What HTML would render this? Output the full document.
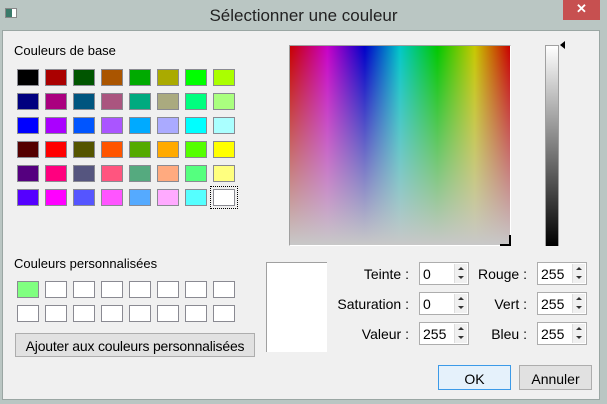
<!DOCTYPE html>
<html><head><meta charset="utf-8"><style>
*{margin:0;padding:0;box-sizing:border-box}
body{width:607px;height:404px;background:#bac6c3;position:relative;overflow:hidden;font-family:"Liberation Sans",sans-serif;font-size:12px;color:#000}
.a{position:absolute}
.sw{position:absolute;width:22px;height:17px;border:1px solid #8a8a92}
.lbl{position:absolute;text-align:right;width:120px;font-size:13px}
.spin{position:absolute;width:50px;height:23px;background:#fff;border:1px solid #adadad;font-size:14px;padding:3px 0 0 3px}
.spin i{position:absolute;right:1px;top:1px;width:13px;height:19px;border-left:1px solid #ddd;background:#f0f0f0}
.spin i:before{content:"";position:absolute;left:3px;top:3px;border:3px solid transparent;border-bottom:3px solid #333;border-top:0}
.spin i:after{content:"";position:absolute;left:3px;top:12px;border:3px solid transparent;border-top:3px solid #333;border-bottom:0}
.btn{position:absolute;background:#e1e1e1;border:1px solid #adadad;text-align:center;font-size:13px}
</style></head><body>
<div class="a" style="left:5px;top:8px;width:12px;height:10px;background:#fff;border:1px solid #888"><div style="width:6px;height:8px;background:#3a7a6a"></div></div>
<div class="a" style="left:0;width:607px;top:6px;text-align:center;font-size:17px;color:#222">Sélectionner une couleur</div>
<div class="a" style="left:563px;top:0;width:37px;height:20px;background:#c75050;color:#fff;text-align:center;font-size:13px;font-weight:bold;line-height:18px">✕</div>
<div class="a" style="left:2px;top:30px;width:598px;height:370px;background:#f0f0f0;border:1px solid #9aa6a3"></div>

<div class="a" style="left:14px;top:43px;font-size:13px">Couleurs de base</div>
<div id="g"></div>
<div class="a" style="left:14px;top:256px;font-size:13px">Couleurs personnalisées</div>
<div class="btn" style="left:15px;top:333px;width:240px;height:24px;padding-top:4px;font-size:14px;letter-spacing:-0.2px">Ajouter aux couleurs personnalisées</div>

<div class="a" style="left:289px;top:45px;width:222px;height:201px;border-top:1px solid #a0a0a0;border-left:1px solid #a0a0a0;border-right:1px solid #fff;border-bottom:1px solid #fff;background:linear-gradient(to bottom,rgba(200,200,200,0),rgba(200,200,200,1)),linear-gradient(to right,#c80000,#c800c8 17%,#0000c8 34%,#00c8c8 50%,#00c800 67%,#c8c800 84%,#c80000)"></div>
<div class="a" style="left:500px;top:235px;width:11px;height:11px;border-right:2px solid #000;border-bottom:2px solid #000"></div>
<div class="a" style="left:545px;top:45px;width:14px;height:201px;border:1px solid #a0a0a0;border-bottom:0;background:linear-gradient(#fff,#000)"></div>
<div class="a" style="left:560px;top:41px;border:4px solid transparent;border-right:5px solid #000;border-left:0"></div>

<div class="a" style="left:266px;top:262px;width:61px;height:90px;background:#fff;border-left:1px solid #a0a0a0;border-top:1px solid #a0a0a0"></div>

<div class="lbl" style="left:289px;top:266px;font-size:14px">Teinte :</div>
<div class="lbl" style="left:289px;top:296px;font-size:14px">Saturation :</div>
<div class="lbl" style="left:289px;top:326px;font-size:14px">Valeur :</div>
<div class="lbl" style="left:407px;top:266px;font-size:14px">Rouge :</div>
<div class="lbl" style="left:407px;top:296px;font-size:14px">Vert :</div>
<div class="lbl" style="left:407px;top:326px;font-size:14px">Bleu :</div>
<div class="spin" style="left:419px;top:262px">0<i></i></div>
<div class="spin" style="left:419px;top:292px">0<i></i></div>
<div class="spin" style="left:419px;top:322px">255<i></i></div>
<div class="spin" style="left:537px;top:262px">255<i></i></div>
<div class="spin" style="left:537px;top:292px">255<i></i></div>
<div class="spin" style="left:537px;top:322px">255<i></i></div>

<div class="btn" style="left:438px;top:365px;width:73px;height:25px;padding-top:5px;border-color:#3c9ae8;background:#e5f1fb;font-size:14px">OK</div>
<div class="btn" style="left:519px;top:365px;width:73px;height:25px;padding-top:5px;font-size:14px">Annuler</div>

<script>
var c=[["#000000","#aa0000","#005500","#aa5500","#00aa00","#aaaa00","#00ff00","#aaff00"],
["#00007f","#aa007f","#00557f","#aa557f","#00aa7f","#aaaa7f","#00ff7f","#aaff7f"],
["#0000ff","#aa00ff","#0055ff","#aa55ff","#00aaff","#aaaaff","#00ffff","#aaffff"],
["#550000","#ff0000","#555500","#ff5500","#55aa00","#ffaa00","#55ff00","#ffff00"],
["#55007f","#ff007f","#55557f","#ff557f","#55aa7f","#ffaa7f","#55ff7f","#ffff7f"],
["#5500ff","#ff00ff","#5555ff","#ff55ff","#55aaff","#ffaaff","#55ffff","#ffffff"]];
var h="";
for(var r=0;r<6;r++)for(var k=0;k<8;k++){h+='<div class="sw" style="left:'+(17+k*28)+'px;top:'+(69+r*24)+'px;background:'+c[r][k]+'"></div>';}
h+='<div class="a" style="left:210px;top:186px;width:28px;height:23px;border:1px dotted #000"></div>';
for(var r=0;r<2;r++)for(var k=0;k<8;k++){h+='<div class="sw" style="left:'+(17+k*28)+'px;top:'+(281+r*24)+'px;background:'+(r==0&&k==0?'#80ff80':'#fff')+'"></div>';}
document.getElementById("g").innerHTML=h;
</script>
</body></html>
